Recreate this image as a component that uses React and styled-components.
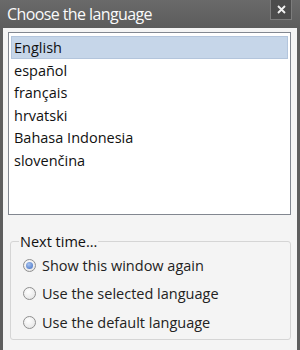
import React, { useState } from "react";
import styled, { createGlobalStyle } from "styled-components";

const GlobalStyle = createGlobalStyle`
  html, body {
    margin: 0;
    padding: 0;
    background: #f4f4f4;
  }
  body {
    font-family: "Open Sans", "Noto Sans", sans-serif;
  }
`;

const Window = styled.div`
  width: 300px;
  height: 350px;
  box-sizing: border-box;
  background: #f4f4f4;
  border-left: 3px solid #5e5e5e;
  border-right: 3px solid #5e5e5e;
  display: flex;
  flex-direction: column;
`;

const TitleBar = styled.div`
  height: 28px;
  margin: 0 -3px;
  background: linear-gradient(#6a6a6a, #5c5c5c);
  display: flex;
  align-items: flex-start;
  justify-content: space-between;
  padding: 0 8px 0 7px;
  flex-shrink: 0;
`;

const Title = styled.span`
  color: #fafafa;
  font-size: 16px;
  line-height: 28px;
  letter-spacing: -0.6px;
`;

const CloseButton = styled.div`
  width: 22px;
  height: 20px;
  box-sizing: border-box;
  background: #4c4c4c;
  border: 1px solid #7c7c7c;
  border-top: none;
  display: flex;
  align-items: center;
  justify-content: center;
`;

const Body = styled.div`
  flex: 1;
  padding: 4px 6px 0 5px;
  display: flex;
  flex-direction: column;
`;

const ListBox = styled.div`
  height: 183px;
  box-sizing: border-box;
  background: #fff;
  border: 1px solid #828790;
  padding: 3px 2px 2px;
  position: relative;
`;

const Item = styled.div`
  height: 22.5px;
  line-height: 22px;
  font-size: 14.5px;
  color: #111;
  padding-left: 2px;
  background: ${p => (p.$selected ? "#c6d6e9" : "transparent")};
  border: 1px solid ${p => (p.$selected ? "#b3c5dc" : "transparent")};
  box-sizing: border-box;
`;

const Group = styled.fieldset`
  margin: 17px 0 0 2px;
  height: 108px;
  box-sizing: border-box;
  border: 1px solid #d5d5d5;
  border-radius: 3px;
  padding: 0 0 0 12px;
  display: flex;
  flex-direction: column;
`;

const Legend = styled.legend`
  font-size: 14.5px;
  color: #111;
  padding: 0 1px;
  margin-left: -4px;
`;

const Option = styled.label`
  display: flex;
  align-items: center;
  gap: 6px;
  height: 28.5px;
  font-size: 14.5px;
  color: #222;
`;

const Radio = styled.span`
  width: 13px;
  height: 13px;
  box-sizing: border-box;
  border-radius: 50%;
  border: 1px solid #8f8f8f;
  background: radial-gradient(circle at 40% 35%, #fff, #e0e0e0);
  display: flex;
  align-items: center;
  justify-content: center;
  flex-shrink: 0;
  &::after {
    content: "";
    display: ${p => (p.$checked ? "block" : "none")};
    width: 7px;
    height: 7px;
    border-radius: 50%;
    background: radial-gradient(circle at 40% 35%, #a9c4ef, #3d6cc2);
  }
`;

const languages = ["English", "español", "français", "hrvatski", "Bahasa Indonesia", "slovenčina"];
const options = ["Show this window again", "Use the selected language", "Use the default language"];

export default function App() {
  const [lang, setLang] = useState(0);
  const [opt, setOpt] = useState(0);
  return (
    <>
      <GlobalStyle />
      <Window>
        <TitleBar>
          <Title>Choose the language</Title>
          <CloseButton>
            <svg width="9" height="9" viewBox="0 0 9 9">
              <path d="M1 1L8 8M8 1L1 8" stroke="#f2f2f2" strokeWidth="1.8" />
            </svg>
          </CloseButton>
        </TitleBar>
        <Body>
          <ListBox>
            {languages.map((l, i) => (
              <Item key={l} $selected={i === lang} onClick={() => setLang(i)}>{l}</Item>
            ))}
          </ListBox>
          <Group>
            <Legend>Next time...</Legend>
            {options.map((o, i) => (
              <Option key={o} onClick={() => setOpt(i)}>
                <Radio $checked={i === opt} />
                {o}
              </Option>
            ))}
          </Group>
        </Body>
      </Window>
    </>
  );
}
